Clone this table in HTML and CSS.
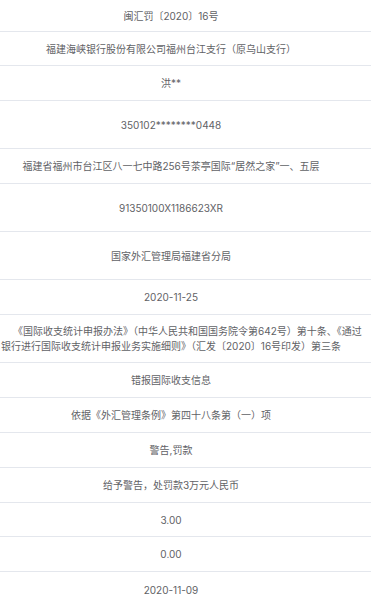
FILE: index.html
```html
<!DOCTYPE html>
<html lang="zh-CN">
<head>
<meta charset="utf-8">
<title>行政处罚信息</title>
<link rel="stylesheet" href="styles.css">
</head>
<body>
<div class="table">
  <div class="row h32"><div class="cell">闽汇罚〔2020〕16号</div></div>
  <div class="row h34"><div class="cell">福建海峡银行股份有限公司福州台江支行（原乌山支行）</div></div>
  <div class="row h35"><div class="cell">洪**</div></div>
  <div class="row h48"><div class="cell">350102********0448</div></div>
  <div class="row h35"><div class="cell">福建省福州市台江区八一七中路256号茶亭国际“居然之家”一、五层</div></div>
  <div class="row h48"><div class="cell">91350100X1186623XR</div></div>
  <div class="row h48"><div class="cell">国家外汇管理局福建省分局</div></div>
  <div class="row h35"><div class="cell">2020-11-25</div></div>
  <div class="row h48">
    <div class="cell multi">
      <div class="line l1">《国际收支统计申报办法》（中华人民共和国国务院令第642号）第十条、《通过</div>
      <div class="line l2">银行进行国际收支统计申报业务实施细则》（汇发〔2020〕16号印发）第三条</div>
    </div>
  </div>
  <div class="row h35"><div class="cell">错报国际收支信息</div></div>
  <div class="row h35"><div class="cell">依据《外汇管理条例》第四十八条第（一）项</div></div>
  <div class="row h35"><div class="cell">警告,罚款</div></div>
  <div class="row h35"><div class="cell">给予警告，处罚款3万元人民币</div></div>
  <div class="row h34"><div class="cell">3.00</div></div>
  <div class="row h35"><div class="cell">0.00</div></div>
  <div class="row h35 last"><div class="cell">2020-11-09</div></div>
</div>
</body>
</html>
```

FILE: styles.css
```css
html, body {
  margin: 0;
  padding: 0;
  background: #ffffff;
  overflow: hidden;
}
body {
  font-family: Inter, "Noto Sans CJK SC", sans-serif;
  font-size: 10px;
  color: #5f6266;
}
.table {
  display: flex;
  flex-direction: column;
  width: 371px;
}
.row {
  display: flex;
  align-items: center;
  box-sizing: border-box;
  border-bottom: 1px solid #e4e7ed;
  padding-right: 29px;
  overflow: hidden;
}
.row.last { border-bottom: none; }
.h32 { height: 32px; }
.h34 { height: 34px; }
.h35 { height: 35px; }
.h48 { height: 48px; }
.cell {
  flex: 1;
  text-align: center;
  white-space: nowrap;
  line-height: 16px;
}
.cell.multi {
  text-align: left;
  line-height: 15px;
  margin-right: -29px;
}
.line { white-space: nowrap; }
.l1 { padding-left: 13px; }
.l2 { padding-left: 1px; }
```
